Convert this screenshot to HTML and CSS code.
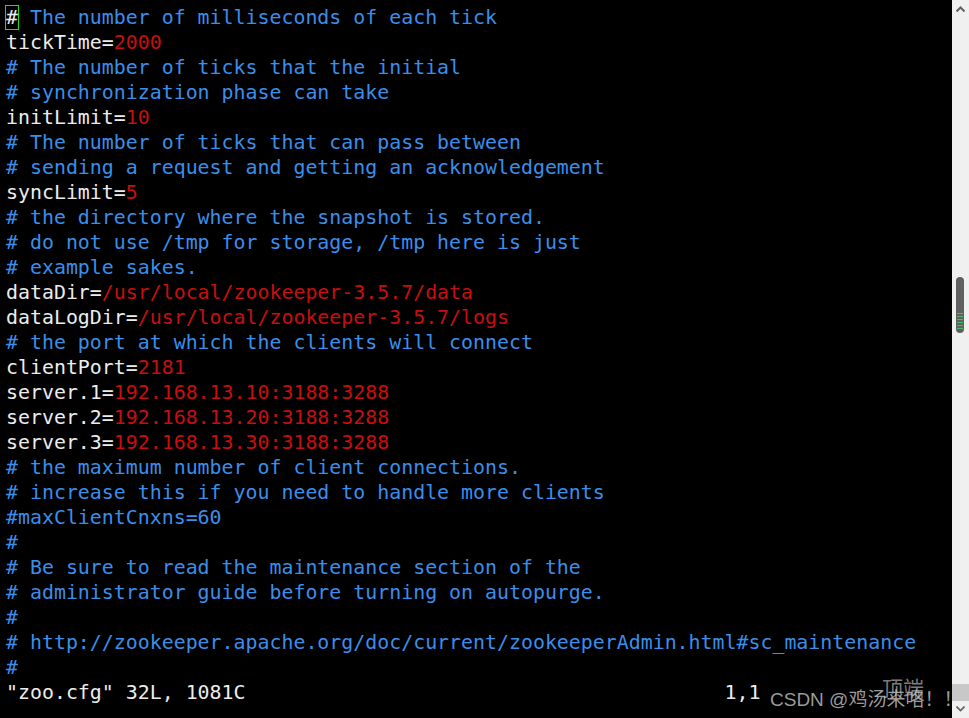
FILE: index.html
```html
<!DOCTYPE html>
<html>
<head>
<meta charset="utf-8">
<link rel="stylesheet" href="styles.css">
</head>
<body>
<div class="window">
<pre class="term"><span class="c"><span class="cur">#</span> The number of milliseconds of each tick</span>
<span class="k">tickTime=</span><span class="v">2000</span>
<span class="c"># The number of ticks that the initial</span>
<span class="c"># synchronization phase can take</span>
<span class="k">initLimit=</span><span class="v">10</span>
<span class="c"># The number of ticks that can pass between</span>
<span class="c"># sending a request and getting an acknowledgement</span>
<span class="k">syncLimit=</span><span class="v">5</span>
<span class="c"># the directory where the snapshot is stored.</span>
<span class="c"># do not use /tmp for storage, /tmp here is just</span>
<span class="c"># example sakes.</span>
<span class="k">dataDir=</span><span class="v">/usr/local/zookeeper-3.5.7/data</span>
<span class="k">dataLogDir=</span><span class="v">/usr/local/zookeeper-3.5.7/logs</span>
<span class="c"># the port at which the clients will connect</span>
<span class="k">clientPort=</span><span class="v">2181</span>
<span class="k">server.1=</span><span class="v">192.168.13.10:3188:3288</span>
<span class="k">server.2=</span><span class="v">192.168.13.20:3188:3288</span>
<span class="k">server.3=</span><span class="v">192.168.13.30:3188:3288</span>
<span class="c"># the maximum number of client connections.</span>
<span class="c"># increase this if you need to handle more clients</span>
<span class="c">#maxClientCnxns=60</span>
<span class="c">#</span>
<span class="c"># Be sure to read the maintenance section of the</span>
<span class="c"># administrator guide before turning on autopurge.</span>
<span class="c">#</span>
<span class="c"># http://zookeeper.apache.org/doc/current/zookeeperAdmin.html#sc_maintenance</span>
<span class="c">#</span>
<span class="k">"zoo.cfg" 32L, 1081C                                        1,1</span></pre>
<div class="scrollbar">
<svg class="arrow up" width="9" height="6" viewBox="0 0 9 6"><path d="M0.5 5.5 L4.5 1.5 L8.5 5.5" fill="none" stroke="#606060" stroke-width="2"/></svg>
<div class="track">
<div class="thumb"><div class="grip"></div></div>
</div>
<div class="corner"></div>
<svg class="arrow down" width="9" height="6" viewBox="0 0 9 6"><path d="M0.5 0.5 L4.5 4.5 L8.5 0.5" fill="none" stroke="#606060" stroke-width="1.6"/></svg>
</div>
<div class="wm-top">顶端</div>
<div class="wm">CSDN @鸡汤来咯！！</div>
</div>
</body>
</html>
```
FILE: styles.css
```css
html, body {
  margin: 0;
  padding: 0;
  background: #000;
  width: 969px;
  height: 718px;
  overflow: hidden;
}
.window {
  position: relative;
  display: flex;
  width: 969px;
  height: 718px;
  background: #000;
}
.term {
  flex: 1;
  margin: 0;
  padding: 5px 0 0 6px;
  font-family: "DejaVu Sans Mono", "Liberation Mono", monospace;
  font-size: 19.9px;
  line-height: 25px;
  color: #ececec;
  white-space: pre;
  overflow: hidden;
}
.c { color: #3b8eea; }
.k { color: #ececec; }
.v { color: #c80f0f; }
.cur {
  color: #ececec;
  outline: 1px solid #16e016;
  outline-offset: 0px;
}
.scrollbar {
  width: 17px;
  background: #f0f0f0;
  display: flex;
  flex-direction: column;
  align-items: center;
}
.arrow.up { margin-top: 6px; }
.track {
  flex: 1;
  width: 100%;
  position: relative;
}
.thumb {
  position: absolute;
  top: 265px;
  left: 4px;
  width: 8px;
  height: 56px;
  border-radius: 4px;
  background: #606060;
}
.grip {
  position: absolute;
  left: 1px;
  right: 1px;
  top: 36px;
  height: 18px;
  background: repeating-linear-gradient(to bottom, #3fc25a 0 1px, #606060 1px 3px);
}
.corner {
  width: 100%;
  height: 17px;
  background: #c8c8c8;
  margin-bottom: 5px;
}
.arrow.down { margin-bottom: 6px; }
.wm {
  position: absolute;
  left: 770px;
  top: 684px;
  font-family: "Liberation Sans", "Noto Sans CJK SC", sans-serif;
  font-size: 19px;
  color: rgba(200, 200, 200, 0.78);
  white-space: nowrap;
}
.wm-top {
  position: absolute;
  left: 882px;
  top: 672px;
  font-family: "Noto Sans CJK SC", sans-serif;
  font-size: 21px;
  color: rgba(180, 180, 180, 0.7);
  white-space: nowrap;
}
```
